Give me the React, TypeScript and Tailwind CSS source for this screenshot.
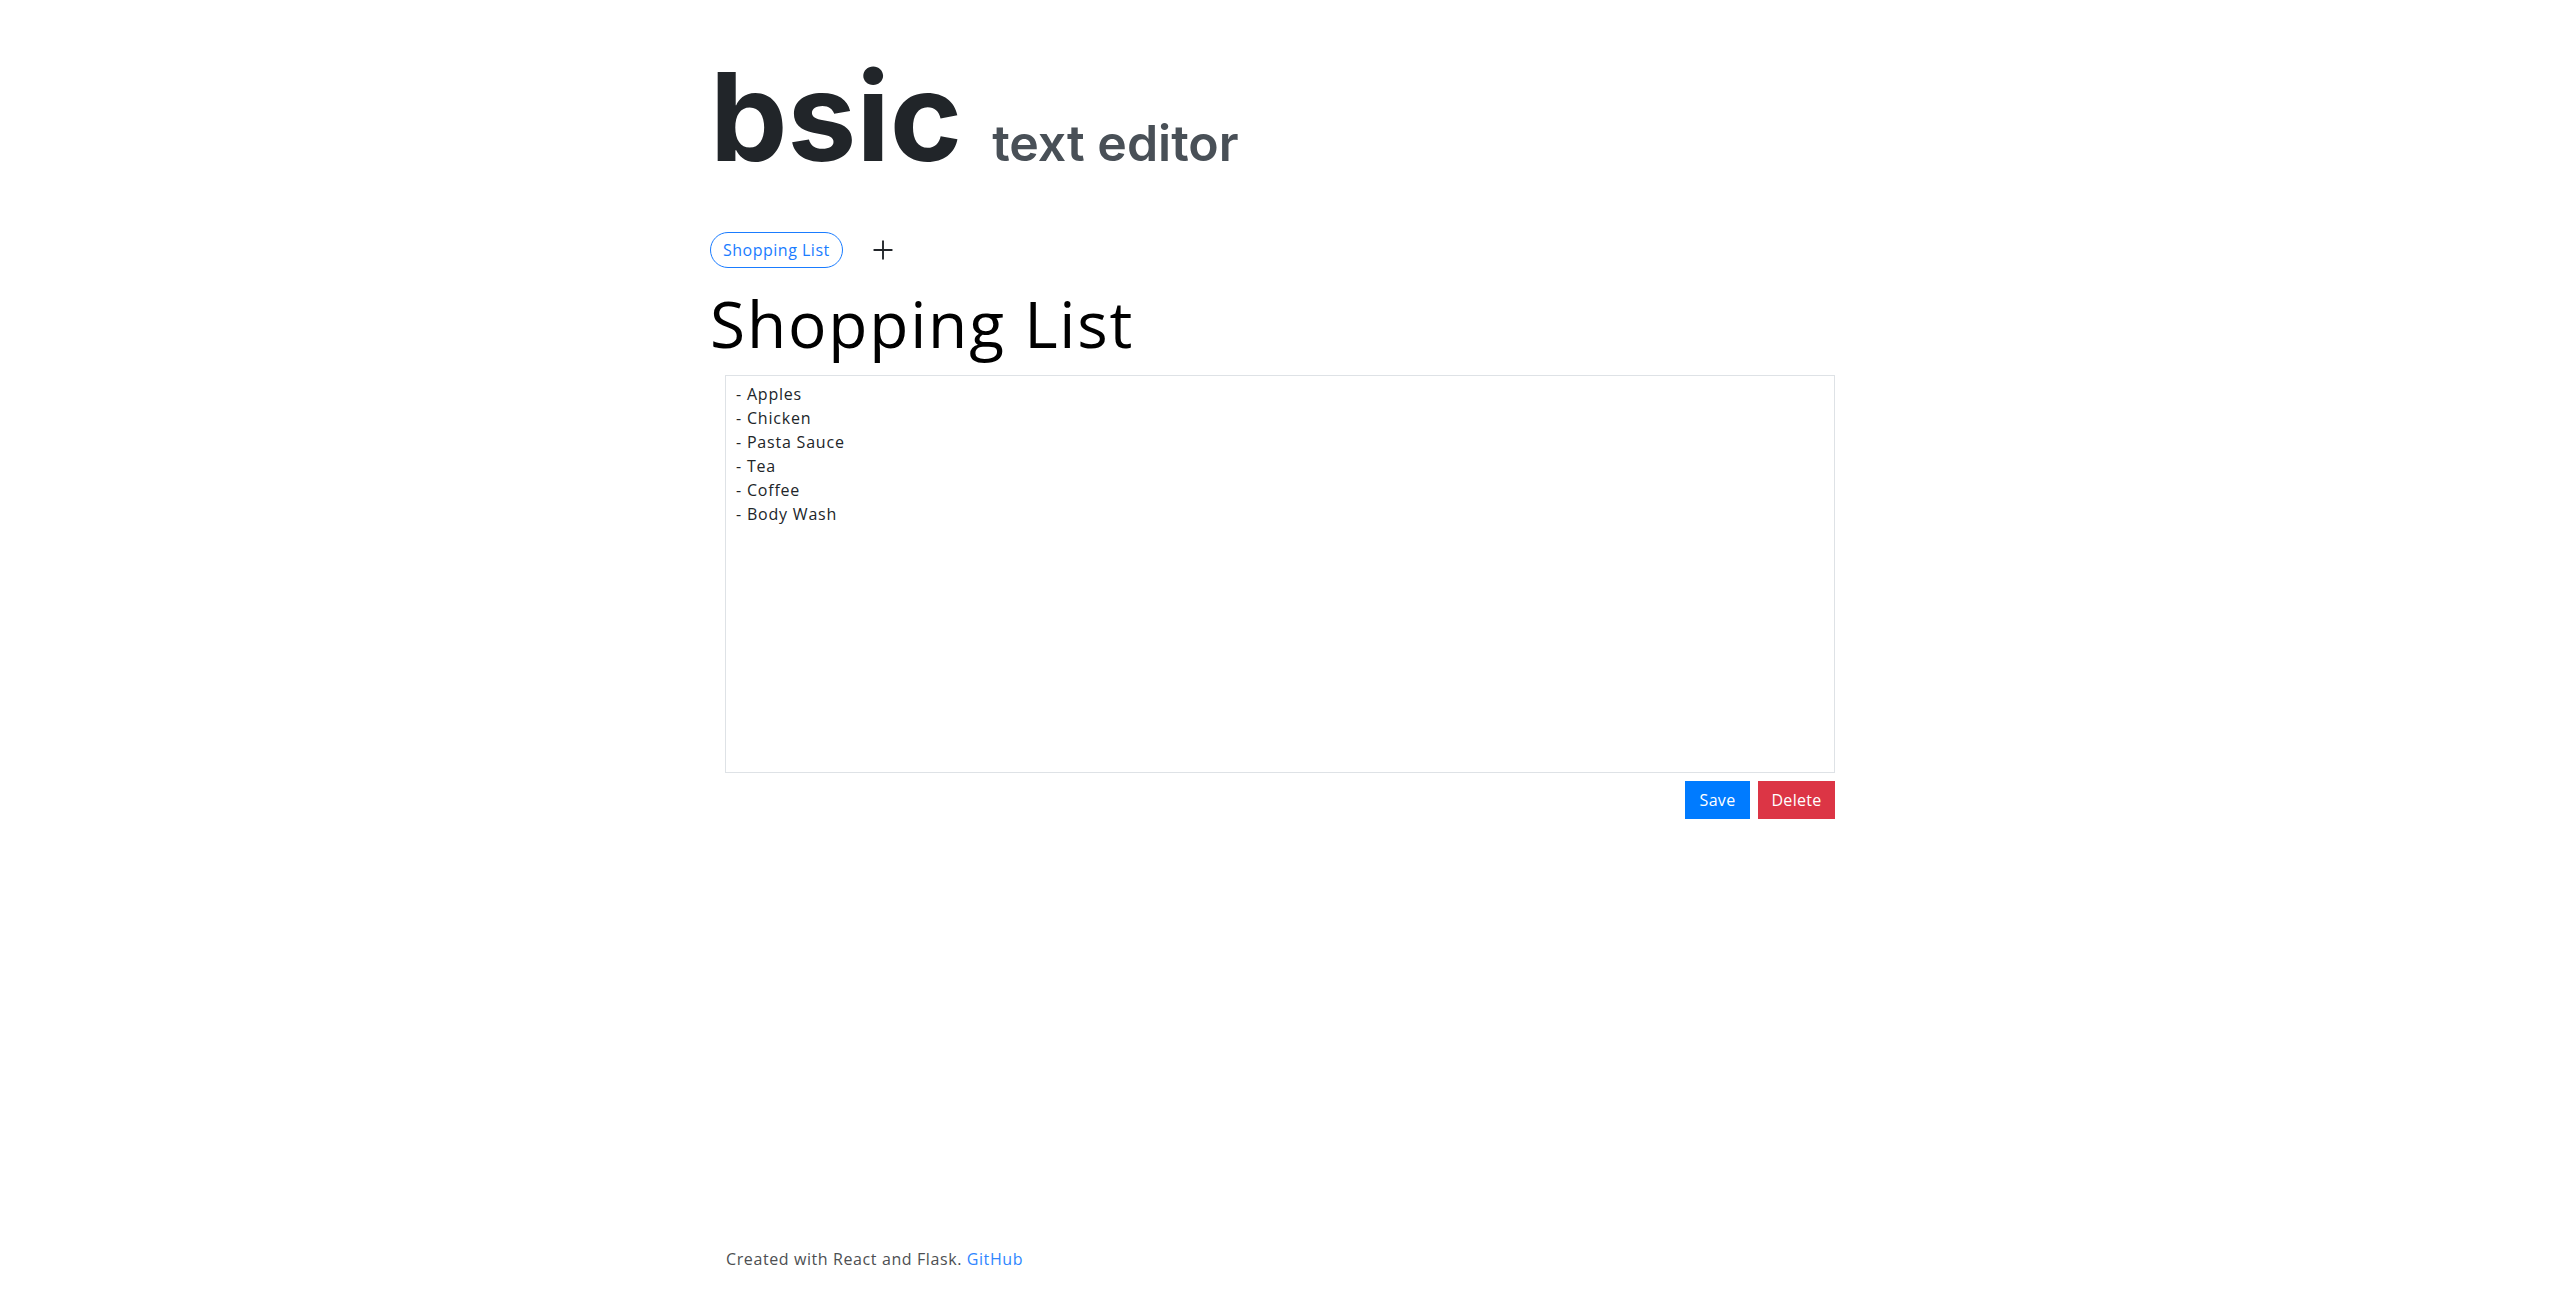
import { Plus } from "lucide-react"

const body = "font-['Open_Sans',sans-serif]"

const App = () => {
  const notes = "- Apples\n- Chicken\n- Pasta Sauce\n- Tea\n- Coffee\n- Body Wash"

  return (
    <div className={`min-h-screen flex flex-col bg-white ${body}`}>
      <div className="w-[1140px] mx-auto flex-1">
        <header className="pt-[55px] flex items-baseline font-['Inter',sans-serif]">
          <h1 className="text-[123px] leading-none font-bold text-[#212529]">bsic</h1>
          <span className="ml-[30px] text-[50px] leading-none font-semibold text-[#495057]">text editor</span>
        </header>

        <div className="mt-[54px] flex items-center">
          <button className="h-[36px] px-[12px] rounded-full border border-[#1a7cff] text-[16px] tracking-[0.5px] text-[#1a7cff]">
            Shopping List
          </button>
          <button className="ml-[25px] text-[#212529]">
            <Plus size={30} strokeWidth={1.5} />
          </button>
        </div>

        <h2 className="mt-[18px] text-[64px] leading-[1.2] tracking-[1.8px] font-normal text-black">Shopping List</h2>

        <div className="px-[15px] mt-[12px]">
          <textarea
            className="block w-full h-[398px] border border-[#dee2e6] px-[10px] py-[6px] text-[16px] leading-[24px] tracking-[0.8px] text-[#212529] resize-none outline-none"
            defaultValue={notes}
          />
          <div className="mt-[8px] flex justify-end gap-[8px]">
            <button className="h-[38px] w-[65px] bg-[#007bff] text-white text-[16px] tracking-[0.3px]">Save</button>
            <button className="h-[38px] w-[77px] bg-[#dc3545] text-white text-[16px] tracking-[0.3px]">Delete</button>
          </div>
        </div>
      </div>

      <footer className="w-[1140px] mx-auto px-[16px] pb-[36px] text-[16px] leading-[24px] tracking-[0.6px] text-[#4d4f52]">
        Created with React and Flask. <a href="#" className="text-[#2f86ff]">GitHub</a>
      </footer>
    </div>
  )
}

export default App
